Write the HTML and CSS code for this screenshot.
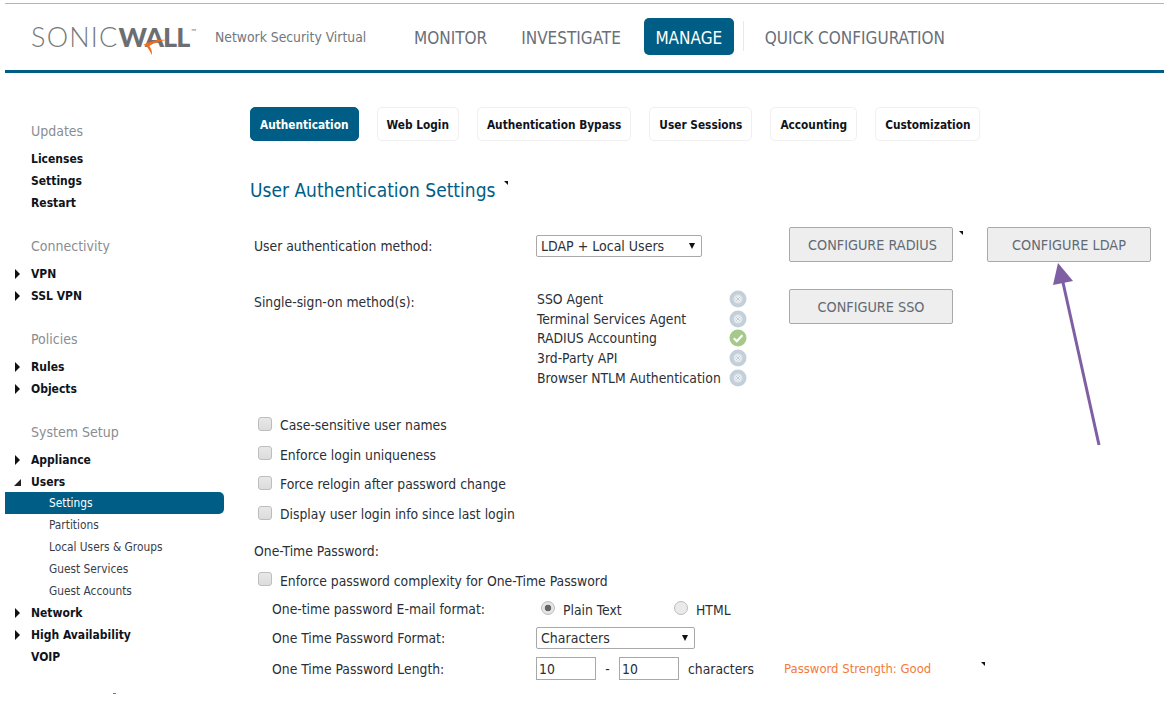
FILE: index.html
```html
<!DOCTYPE html>
<html lang="en">
<head>
    <meta charset="UTF-8">
    <meta name="viewport" content="width=device-width, initial-scale=1.0">
    <title>SonicWall - User Authentication Settings</title>
    <link rel="stylesheet" href="styles.css">
</head>
<body>
    <svg class="defs" width="0" height="0">
        <symbol id="off" viewBox="0 0 18 18">
            <circle cx="9" cy="9" r="8.5" fill="#c3d0da"/>
            <circle cx="9" cy="9" r="4.5" fill="#dfe6eb"/>
            <path d="M6.8 6.8l4.4 4.4M11.2 6.8l-4.4 4.4" stroke="#fff" stroke-width="1.6"/>
            <path d="M6.8 6.8l4.4 4.4M11.2 6.8l-4.4 4.4" stroke="#9aa8b2" stroke-width=".6"/>
        </symbol>
        <symbol id="on" viewBox="0 0 18 18">
            <circle cx="9" cy="9" r="8.5" fill="#a5c98a"/>
            <path d="M4.8 9.2l3 3 5.6-6" fill="none" stroke="#fff" stroke-width="2.2"/>
        </symbol>
    </svg>

    <header class="topbar">
        <div class="logo">
            <span class="logo-sonic">SONIC</span><span class="logo-wall">WALL</span><span class="logo-tm">™</span>
            <svg class="swoosh" width="26" height="18" viewBox="0 0 26 18">
                <path d="M25 2C17 1 10 3 2 7c4 0 5 3 9 10 0-5-1-7-3-9 5-3 10-5 17-6z" fill="#f26b21"/>
            </svg>
        </div>
        <span class="product">Network Security Virtual</span>
        <nav class="mainnav">
            <a>MONITOR</a>
            <a>INVESTIGATE</a>
            <a class="active">MANAGE</a>
            <span class="navsep"></span>
            <a>QUICK CONFIGURATION</a>
        </nav>
    </header>

    <div class="layout">
        <aside class="sidebar">
            <h4>Updates</h4>
            <a class="item">Licenses</a>
            <a class="item">Settings</a>
            <a class="item">Restart</a>

            <h4>Connectivity</h4>
            <a class="item closed">VPN</a>
            <a class="item closed">SSL VPN</a>

            <h4>Policies</h4>
            <a class="item closed">Rules</a>
            <a class="item closed">Objects</a>

            <h4>System Setup</h4>
            <a class="item closed">Appliance</a>
            <a class="item open">Users</a>
            <a class="sub selected">Settings</a>
            <a class="sub">Partitions</a>
            <a class="sub">Local Users &amp; Groups</a>
            <a class="sub">Guest Services</a>
            <a class="sub">Guest Accounts</a>
            <a class="item closed">Network</a>
            <a class="item closed">High Availability</a>
            <a class="item">VOIP</a>
            <span class="tick"></span>
        </aside>

        <main class="content">
            <div class="tabs">
                <a class="tab active">Authentication</a>
                <a class="tab">Web Login</a>
                <a class="tab">Authentication Bypass</a>
                <a class="tab">User Sessions</a>
                <a class="tab">Accounting</a>
                <a class="tab">Customization</a>
            </div>

            <h1 class="title">User Authentication Settings <span class="mark"></span></h1>

            <div class="row method-row">
                <label class="label">User authentication method:</label>
                <span class="selectbox method-select">
                    <select><option>LDAP + Local Users</option></select>
                </span>
                <button class="btn radius-btn">CONFIGURE RADIUS</button>
                <span class="mark btn-mark"></span>
                <button class="btn ldap-btn">CONFIGURE LDAP</button>
            </div>

            <div class="row sso-row">
                <label class="label sso-label">Single-sign-on method(s):</label>
                <ul class="sso-list">
                    <li>SSO Agent <svg class="status"><use href="#off"/></svg></li>
                    <li>Terminal Services Agent <svg class="status"><use href="#off"/></svg></li>
                    <li>RADIUS Accounting <svg class="status"><use href="#on"/></svg></li>
                    <li>3rd-Party API <svg class="status"><use href="#off"/></svg></li>
                    <li>Browser NTLM Authentication <svg class="status"><use href="#off"/></svg></li>
                </ul>
                <button class="btn">CONFIGURE SSO</button>
            </div>

            <div class="checks">
                <label class="check"><input type="checkbox">Case-sensitive user names</label>
                <label class="check"><input type="checkbox">Enforce login uniqueness</label>
                <label class="check"><input type="checkbox">Force relogin after password change</label>
                <label class="check"><input type="checkbox">Display user login info since last login</label>
            </div>

            <div class="otp-title">One-Time Password:</div>
            <label class="check otp-check"><input type="checkbox">Enforce password complexity for One-Time Password</label>

            <div class="otp-row otp-email">
                <span class="otp-label">One-time password E-mail format:</span>
                <label class="radio plain"><input type="radio" name="fmt" checked>Plain Text</label>
                <label class="radio"><input type="radio" name="fmt">HTML</label>
            </div>
            <div class="otp-row otp-format">
                <span class="otp-label">One Time Password Format:</span>
                <span class="selectbox format-select">
                    <select><option>Characters</option></select>
                </span>
            </div>
            <div class="otp-row otp-length">
                <span class="otp-label">One Time Password Length:</span>
                <input class="num" type="text" value="10">
                <span class="dash">-</span>
                <input class="num" type="text" value="10">
                <span class="unit">characters</span>
                <span class="strength">Password Strength: Good</span>
                <span class="mark strength-mark"></span>
            </div>
        </main>
    </div>

    <!-- annotation arrow pointing at the LDAP button -->
    <svg class="arrow" width="1176" height="701" viewBox="0 0 1176 701">
        <path d="M1099 445L1062 278" stroke="#7f5fa3" stroke-width="3" fill="none"/>
        <path d="M1058 263L1073 281L1053 285Z" fill="#7f5fa3"/>
    </svg>
</body>
</html>
```

FILE: styles.css
```css
* {
    margin: 0;
    padding: 0;
    box-sizing: border-box;
}
html, body {
    height: 100%;
    overflow: hidden;
}
body {
    font-family: "DejaVu Sans", "Noto Sans", sans-serif;
    font-stretch: condensed;
    font-size: 13.8px;
    color: #2b2f36;
    background: #fff;
    padding: 3px 12px 0 5px;
}
.defs {
    position: absolute;
}

/* top bar */
.topbar {
    height: 70px;
    border-top: 1px solid #b5b5b5;
    border-bottom: 3px solid #005e86;
    display: flex;
    align-items: center;
}
.logo {
    position: relative;
    margin-left: 26px;
    width: 184px;
    font-family: "Lato", sans-serif;
    font-stretch: normal;
    font-size: 27px;
    line-height: 28px;
    color: #77787b;
    white-space: nowrap;
}
.logo-sonic {
    font-weight: 300;
    letter-spacing: 1.2px;
}
.logo-wall {
    font-weight: 900;
    color: #6d6e71;
    letter-spacing: -.8px;
}
.logo-tm {
    position: absolute;
    left: 160px;
    top: -6px;
    font-size: 7px;
}
.swoosh {
    position: absolute;
    left: 110px;
    top: 15px;
}
.product {
    font-size: 13.8px;
    color: #6f7780;
    width: 186px;
}
.mainnav {
    display: flex;
    align-items: center;
    margin-top: -2px;
    font-size: 17px;
    color: #68707a;
}
.mainnav a {
    padding: 0 13px;
    height: 37px;
    line-height: 41px;
    margin-right: 8px;
    border-radius: 5px;
}
.mainnav .active {
    background: #005e86;
    color: #fff;
    width: 90px;
    padding: 0;
    text-align: center;
    margin-left: 2px;
    margin-right: 0;
}
.navsep {
    width: 1px;
    height: 30px;
    background: #e8e8e8;
    margin: 0 8px 0 9px;
}

/* layout */
.layout {
    display: flex;
}
.sidebar {
    width: 219px;
    padding-top: 47px;
    position: relative;
}
.sidebar h4 {
    font-weight: normal;
    font-size: 14px;
    color: #8a8d92;
    line-height: 22px;
    height: 22px;
    margin: 21px 0 6px 26px;
}
.sidebar h4:first-child {
    margin-top: 0;
}
.item, .sub {
    display: block;
    height: 22px;
    line-height: 22px;
    white-space: nowrap;
}
.item {
    position: relative;
    padding-left: 26px;
    font-weight: bold;
    font-size: 12px;
    color: #10131a;
}
.sub {
    padding-left: 44px;
    font-size: 11.8px;
    color: #3a3d48;
}
.selected {
    background: #005e86;
    color: #fff;
    border-radius: 0 5px 5px 0;
}
.closed::before {
    content: "";
    position: absolute;
    left: 10px;
    top: 6px;
    border-left: 5px solid #111;
    border-top: 5px solid transparent;
    border-bottom: 5px solid transparent;
}
.open {
    margin-bottom: -1px;
}
.open::before {
    content: "";
    position: absolute;
    left: 9px;
    top: 8px;
    border-right: 7px solid #222;
    border-top: 7px solid transparent;
}
.tick {
    position: absolute;
    left: 108px;
    top: 620px;
    width: 3px;
    height: 1px;
    background: #777;
}

/* main area */
.content {
    flex: 1;
    margin-left: 26px;
    padding-top: 34px;
}
.tabs {
    display: flex;
    gap: 18px;
}
.tab {
    height: 34px;
    line-height: 34px;
    padding: 0 9px;
    font-size: 11.75px;
    font-weight: bold;
    color: #10131a;
    background: #fff;
    border: 1px solid #f0f0f0;
    border-radius: 5px;
    white-space: nowrap;
}
.tab.active {
    background: #005e86;
    border-color: #005e86;
    color: #fff;
}
.title {
    font-weight: normal;
    font-size: 19px;
    line-height: 28px;
    color: #005e86;
    margin: 35px 0 23px;
}
.mark {
    display: inline-block;
    vertical-align: 12px;
    margin-left: 3px;
    border-top: 4px solid #111;
    border-left: 4px solid transparent;
}
.row {
    display: flex;
    align-items: flex-start;
}
.label {
    width: 286px;
    padding-left: 4px;
    line-height: 20px;
    padding-top: 9px;
}
.sso-label {
    padding-top: 3px;
}
.selectbox {
    position: relative;
    display: block;
}
.selectbox select {
    appearance: none;
    width: 100%;
    height: 100%;
    font: inherit;
    font-size: 14px;
    font-stretch: condensed;
    color: #2b2f36;
    background: #fff;
    border: 1px solid #a8a8a8;
    border-radius: 2px;
    padding-left: 4px;
}
.selectbox::after {
    content: "";
    position: absolute;
    right: 7px;
    top: 8px;
    border-top: 6px solid #111;
    border-left: 3.5px solid transparent;
    border-right: 3.5px solid transparent;
}
.method-select {
    width: 166px;
    height: 22px;
    margin-top: 8px;
    margin-right: 87px;
}
.btn {
    width: 164px;
    height: 35px;
    font-family: inherit;
    font-stretch: condensed;
    font-size: 14.3px;
    color: #626a74;
    background: #eee;
    border: 1px solid #a9a9a9;
    border-radius: 2px;
}
.radius-btn {
    padding-left: 3px;
}
.btn-mark {
    margin: 4px 0 0 6px;
    vertical-align: top;
}
.ldap-btn {
    margin-left: 24px;
}
.sso-row {
    margin-top: 27px;
}
.sso-list {
    list-style: none;
    width: 253px;
}
.sso-list li {
    height: 19.7px;
    line-height: 20px;
    position: relative;
    padding-left: 1px;
    white-space: nowrap;
}
.status {
    position: absolute;
    left: 193px;
    top: 1px;
    width: 18px;
    height: 18px;
}
.checks {
    margin-top: 23px;
}
.check {
    display: flex;
    align-items: center;
    height: 29.6px;
    padding-left: 8px;
}
.check input, .radio input {
    appearance: none;
    flex: none;
    background: linear-gradient(#e8e8e8, #dcdcdc);
    border: 1px solid #bdbdbd;
}
.check input {
    width: 14px;
    height: 14px;
    border-radius: 3px;
    margin: -3px 8px 0 0;
}
.otp-title {
    line-height: 20px;
    padding-left: 4px;
    margin-top: 12px;
}
.otp-check {
    margin-top: 5px;
}
.otp-row {
    display: flex;
    align-items: center;
    padding-left: 22px;
    white-space: nowrap;
}
.otp-label {
    width: 264px;
}
.otp-email {
    height: 29px;
    margin-top: -1px;
}
.radio {
    display: flex;
    align-items: center;
    padding-top: 2px;
}
.radio input {
    width: 14px;
    height: 14px;
    border-radius: 50%;
    margin: -4px 8px 0 5px;
    background: #eaeaea;
}
.radio input:checked {
    background: radial-gradient(circle, #666 0 3px, #e4e4e4 3.6px);
}
.plain {
    width: 133px;
}
.otp-format {
    height: 30px;
}
.format-select {
    width: 159px;
    height: 22px;
}
.otp-length {
    height: 31px;
}
.num {
    width: 60px;
    height: 23px;
    font: inherit;
    font-stretch: condensed;
    color: #2b2f36;
    border: 1px solid #a8a8a8;
    padding-left: 2px;
}
.dash {
    width: 23px;
    text-align: center;
}
.unit {
    margin-left: 9px;
    width: 96px;
}
.strength {
    font-size: 13px;
    color: #f47a3a;
    width: 197px;
}
.strength-mark {
    margin: -10px 0 0 0;
}

/* annotation */
.arrow {
    position: absolute;
    left: 0;
    top: 0;
    pointer-events: none;
}
```
